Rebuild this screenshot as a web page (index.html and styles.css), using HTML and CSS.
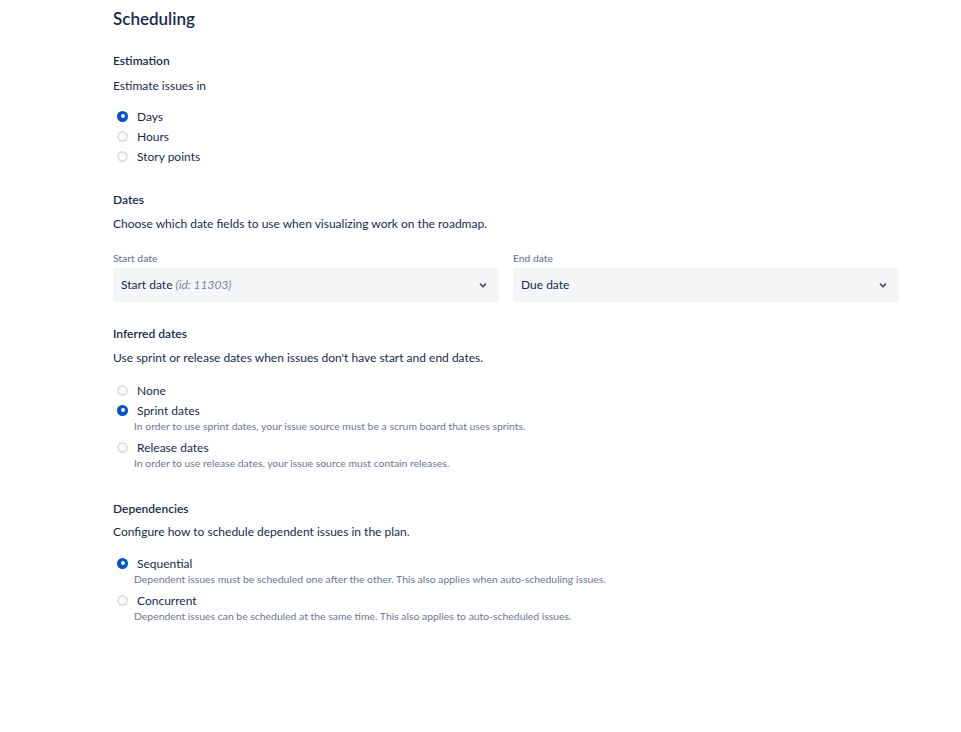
FILE: index.html
```html
<!DOCTYPE html>
<html lang="en">

<head>
  <meta charset="UTF-8">
  <meta name="viewport" content="width=device-width, initial-scale=1.0">
  <title>Scheduling</title>
  <link rel="stylesheet" href="styles.css">
</head>

<body>

  <div class="page">
    <h1 class="title">Scheduling</h1>

    <!-- estimation -->
    <div class="section sec-estimation">
      <h2 class="heading">Estimation</h2>
      <p class="desc">Estimate issues in</p>
      <div class="radios">
        <label class="radio"><span class="dot checked"></span><span class="text">Days</span></label>
        <label class="radio"><span class="dot"></span><span class="text">Hours</span></label>
        <label class="radio"><span class="dot"></span><span class="text">Story points</span></label>
      </div>
    </div>

    <!-- dates -->
    <div class="section sec-dates">
      <h2 class="heading">Dates</h2>
      <p class="desc">Choose which date fields to use when visualizing work on the roadmap.</p>
      <div class="fields">
        <div class="field">
          <div class="field-label">Start date</div>
          <div class="select">
            <span class="value">Start date <i class="muted">(id: 11303)</i></span>
            <svg class="chevron" viewBox="0 0 24 24" width="20" height="20"><path d="M8.292 10.293a1.009 1.009 0 0 0 0 1.419l2.939 2.965c.218.215.5.322.779.322s.556-.107.769-.322l2.93-2.955a1.01 1.01 0 0 0 0-1.419.987.987 0 0 0-1.406 0l-2.298 2.317-2.307-2.327a.99.99 0 0 0-1.406 0z" fill="currentColor"/></svg>
          </div>
        </div>
        <div class="field">
          <div class="field-label">End date</div>
          <div class="select">
            <span class="value">Due date</span>
            <svg class="chevron" viewBox="0 0 24 24" width="20" height="20"><path d="M8.292 10.293a1.009 1.009 0 0 0 0 1.419l2.939 2.965c.218.215.5.322.779.322s.556-.107.769-.322l2.93-2.955a1.01 1.01 0 0 0 0-1.419.987.987 0 0 0-1.406 0l-2.298 2.317-2.307-2.327a.99.99 0 0 0-1.406 0z" fill="currentColor"/></svg>
          </div>
        </div>
      </div>
    </div>

    <!-- inferred dates -->
    <div class="section sec-inferred">
      <h2 class="heading">Inferred dates</h2>
      <p class="desc">Use sprint or release dates when issues don't have start and end dates.</p>
      <div class="radios">
        <label class="radio"><span class="dot"></span><span class="text">None</span></label>
        <label class="radio"><span class="dot checked"></span><span class="text">Sprint dates</span></label>
        <p class="helper">In order to use sprint dates, your issue source must be a scrum board that uses sprints.</p>
        <label class="radio"><span class="dot"></span><span class="text">Release dates</span></label>
        <p class="helper">In order to use release dates, your issue source must contain releases.</p>
      </div>
    </div>

    <!-- dependencies -->
    <div class="section sec-deps">
      <h2 class="heading">Dependencies</h2>
      <p class="desc">Configure how to schedule dependent issues in the plan.</p>
      <div class="radios">
        <label class="radio"><span class="dot checked"></span><span class="text">Sequential</span></label>
        <p class="helper">Dependent issues must be scheduled one after the other. This also applies when auto-scheduling issues.</p>
        <label class="radio"><span class="dot"></span><span class="text">Concurrent</span></label>
        <p class="helper">Dependent issues can be scheduled at the same time. This also applies to auto-scheduled issues.</p>
      </div>
    </div>
  </div>

</body>

</html>
```

FILE: styles.css
```css
* {
  padding: 0;
  margin: 0;
  box-sizing: border-box;
}

body {
  background: #fff;
  color: #172B4D;
  font-family: Lato, "Noto Sans", sans-serif;
  font-size: 12px;
}

.page {
  width: 785px;
  margin-left: 113px;
  padding-top: 7px;
}

.title {
  font-size: 17px;
  line-height: 24px;
  font-weight: 600;
  color: #172B4D;
}

.heading {
  font-size: 12px;
  line-height: 20px;
  font-weight: 600;
}

.desc {
  margin-top: 4px;
  line-height: 20px;
}

.sec-estimation {
  margin-top: 20px;
}

.sec-estimation .desc {
  margin-top: 5px;
}

.sec-dates {
  margin-top: 24px;
}

.sec-inferred {
  margin-top: 22px;
}

.sec-deps {
  margin-top: 30px;
}

.radios {
  margin-top: 10px;
  display: flex;
  flex-direction: column;
}

.sec-inferred .radios {
  margin-top: 12px;
}

.sec-deps .desc {
  margin-top: 3px;
}

.sec-deps .radios {
  margin-top: 11px;
}

.radio {
  display: flex;
  align-items: center;
  height: 20px;
}

.helper + .radio {
  margin-top: 5px;
}

.dot {
  width: 11px;
  height: 11px;
  margin-left: 4px;
  margin-right: 9px;
  border: 2px solid #DFE1E6;
  background: #FAFBFC;
  border-radius: 50%;
  position: relative;
  flex-shrink: 0;
}

.dot.checked {
  background: #0052CC;
  border-color: #0052CC;
}

.dot.checked::after {
  content: "";
  position: absolute;
  left: 1.5px;
  top: 1.5px;
  width: 4px;
  height: 4px;
  background: #fff;
  border-radius: 50%;
}

.helper {
  margin-left: 21px;
  font-size: 10.4px;
  line-height: 12px;
  color: #6B778C;
}

.fields {
  margin-top: 16px;
  display: grid;
  grid-template-columns: 386px 386px;
  column-gap: 14px;
}

.field-label {
  font-size: 10.3px;
  line-height: 16px;
  font-weight: 500;
  color: #6B778C;
  margin-bottom: 2px;
}

.select {
  height: 34px;
  background: #F4F5F7;
  border-radius: 3px;
  display: flex;
  align-items: center;
  justify-content: space-between;
  padding-left: 8px;
  padding-right: 6px;
}

.value {
  line-height: 20px;
}

.muted {
  color: #7A869A;
}

.chevron {
  color: #42526E;
}
```
